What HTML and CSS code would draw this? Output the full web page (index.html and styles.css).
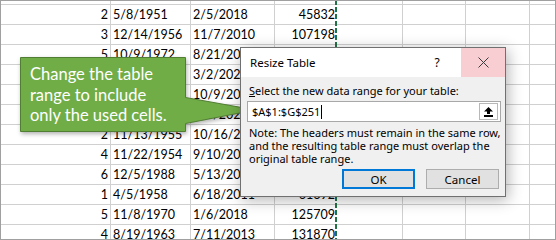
FILE: index.html
```html
<!DOCTYPE html>
<html lang="en">
<head>
  <title>Resize Table</title>
  <link rel="stylesheet" href="styles.css">
</head>
<body>
  <div class="sheet">
    <div class="row top"><div class="c n">4</div><div class="c">3/2/1961</div><div class="c">4/5/2015</div><div class="c n d">98213</div><div class="c"></div><div class="c"></div><div class="c"></div><div class="c"></div></div>
    <div class="row"><div class="c n">2</div><div class="c">5/8/1951</div><div class="c">2/5/2018</div><div class="c n d">45832</div><div class="c"></div><div class="c"></div><div class="c"></div><div class="c"></div></div>
    <div class="row"><div class="c n">3</div><div class="c">12/14/1956</div><div class="c">11/7/2010</div><div class="c n d">107198</div><div class="c"></div><div class="c"></div><div class="c"></div><div class="c"></div></div>
    <div class="row"><div class="c n">5</div><div class="c">10/9/1972</div><div class="c">8/21/2012</div><div class="c n d">71234</div><div class="c"></div><div class="c"></div><div class="c"></div><div class="c"></div></div>
    <div class="row"><div class="c n">1</div><div class="c">6/3/1949</div><div class="c">3/2/2020</div><div class="c n d">88123</div><div class="c"></div><div class="c"></div><div class="c"></div><div class="c"></div></div>
    <div class="row"><div class="c n">3</div><div class="c">7/21/1960</div><div class="c">10/9/2016</div><div class="c n d">55410</div><div class="c"></div><div class="c"></div><div class="c"></div><div class="c"></div></div>
    <div class="row"><div class="c n">6</div><div class="c">2/17/1983</div><div class="c">4/5/2021</div><div class="c n d">92001</div><div class="c"></div><div class="c"></div><div class="c"></div><div class="c"></div></div>
    <div class="row"><div class="c n">2</div><div class="c">11/13/1955</div><div class="c">10/16/2015</div><div class="c n d">84410</div><div class="c"></div><div class="c"></div><div class="c"></div><div class="c"></div></div>
    <div class="row"><div class="c n">4</div><div class="c">11/22/1954</div><div class="c">9/10/2014</div><div class="c n d">76025</div><div class="c"></div><div class="c"></div><div class="c"></div><div class="c"></div></div>
    <div class="row"><div class="c n">6</div><div class="c">12/5/1988</div><div class="c">5/13/2019</div><div class="c n d">39880</div><div class="c"></div><div class="c"></div><div class="c"></div><div class="c"></div></div>
    <div class="row"><div class="c n">1</div><div class="c">4/5/1958</div><div class="c">6/18/2011</div><div class="c n d">61692</div><div class="c"></div><div class="c"></div><div class="c"></div><div class="c"></div></div>
    <div class="row"><div class="c n">5</div><div class="c">11/8/1970</div><div class="c">1/6/2018</div><div class="c n d">125709</div><div class="c"></div><div class="c"></div><div class="c"></div><div class="c"></div></div>
    <div class="row last"><div class="c n">4</div><div class="c">8/19/1963</div><div class="c">7/11/2013</div><div class="c n d">131870</div><div class="c"></div><div class="c"></div><div class="c"></div><div class="c"></div></div>

    <!-- marching ants around the table range -->
    <div class="ants"></div>

    <div class="callout">
      <svg class="callout-shape" width="240" height="84" viewBox="0 0 240 84">
        <polygon points="0.5,0.5 165.5,0.5 165.5,40.5 230,52 230,54 165.5,66.5 165.5,74.5 0.5,74.5" fill="#70ad47" stroke="#507e32" stroke-width="1"/>
      </svg>
      <p class="callout-text">Change the table<br>range to include<br>only the used cells.</p>
    </div>

    <div class="dialog">
      <div class="dialog-title">
        <span class="title-text">Resize Table</span>
        <span class="help">?</span>
        <span class="close">
          <svg width="11" height="11" viewBox="0 0 11 11"><path d="M0.5 0.5 L10.5 10.5 M10.5 0.5 L0.5 10.5" stroke="#3c3c3c" stroke-width="1" fill="none"/></svg>
        </span>
      </div>
      <div class="dialog-body">
        <div class="label"><u>S</u>elect the new data range for your table:</div>
        <div class="range-box">
          <span class="range-text">$A$1:$G$251</span><span class="caret"></span>
          <span class="collapse-btn">
            <svg width="9" height="10" viewBox="0 0 9 10"><path d="M4.5 0 L9 4.5 L6 4.5 L6 7 L3 7 L3 4.5 L0 4.5 Z M0 8 H9 V10 H0 Z" fill="#000"/></svg>
          </span>
        </div>
        <div class="note">Note: The headers must remain in the same row,<br>and the resulting table range must overlap the<br>original table range.</div>
        <div class="buttons">
          <button class="btn btn-ok">OK</button>
          <button class="btn">Cancel</button>
        </div>
      </div>
    </div>
  </div>
</body>
</html>
```

FILE: styles.css
```css
body {
  margin: 0;
  background: #ffffff;
  overflow: hidden;
}

.sheet {
  position: relative;
  width: 556px;
  height: 240px;
  box-sizing: border-box;
  border: 1px solid #a0a0a0;
  overflow: hidden;
  font-family: Lato, 'Liberation Sans', sans-serif;
  font-size: 12.5px;
  color: #000;
}

.row {
  display: grid;
  grid-template-columns: 110px 80px 84px 62px 66px 63px 64px 1fr;
  height: 20px;
  box-sizing: border-box;
  border-bottom: 1px solid #d0d0d0;
}

.row.top {
  height: 4px;
}

.row.last {
  height: 14px;
  border-bottom: none;
}

.c {
  display: flex;
  align-items: flex-end;
  overflow: hidden;
  box-sizing: border-box;
  border-right: 1px solid #d0d0d0;
  padding: 0 2px 0 2px;
  line-height: 19px;
  white-space: nowrap;
}

.row.last .c {
  align-items: flex-start;
}

.c.n {
  justify-content: flex-end;
}

.c.d {
  border-right: none;
  padding-right: 2px;
}

.c:last-child {
  border-right: none;
}

.ants {
  position: absolute;
  left: 334px;
  top: -1px;
  bottom: 0;
  width: 2px;
  background: repeating-linear-gradient(to bottom, #217346 0 5px, transparent 5px 7px);
}

/* green callout */
.callout {
  position: absolute;
  left: 19px;
  top: 56px;
  width: 240px;
  height: 84px;
}

.callout-shape {
  position: absolute;
  left: 0;
  top: 0;
  filter: drop-shadow(1px 2px 2px rgba(0, 0, 0, 0.3));
}

.callout-text {
  position: relative;
  margin: 0;
  padding: 7px 0 0 10px;
  font-family: Lato, 'Liberation Sans', sans-serif;
  font-size: 16.5px;
  line-height: 20.5px;
  color: #ffffff;
  white-space: nowrap;
}

/* resize dialog */
.dialog {
  position: absolute;
  left: 239px;
  top: 46px;
  width: 266px;
  height: 150px;
  box-sizing: border-box;
  border: 1px solid #707070;
  background: #f0f0f0;
  box-shadow: 2px 3px 14px rgba(0, 0, 0, 0.3);
  font-family: 'Noto Sans', 'Open Sans', sans-serif;
  font-size: 11px;
  color: #000;
}

.dialog-title {
  display: flex;
  align-items: center;
  height: 29px;
  background: #ffffff;
}

.title-text {
  padding-left: 9px;
  font-size: 11.5px;
}

.help {
  margin-left: auto;
  width: 48px;
  text-align: center;
  font-size: 12px;
}

.close {
  display: flex;
  align-items: center;
  justify-content: center;
  width: 44px;
  height: 29px;
  background: #f8ced3;
}

.dialog-body {
  padding: 6px 0 0 6px;
}

.label {
  margin-left: 2px;
  line-height: 15px;
}

.range-box {
  display: flex;
  align-items: center;
  width: 254px;
  height: 21px;
  margin-top: 3px;
  box-sizing: border-box;
  border: 1px solid #a8a8a8;
  background: #ffffff;
}

.range-text {
  padding-left: 4px;
}

.caret {
  width: 1px;
  height: 14px;
  margin-left: 1px;
  background: #000;
}

.collapse-btn {
  display: flex;
  align-items: center;
  justify-content: center;
  margin-left: auto;
  margin-right: 2px;
  width: 19px;
  height: 17px;
  box-sizing: border-box;
  border: 1px solid #b8b8b8;
  background: #ffffff;
}

.note {
  margin: 4px 0 0 2px;
  line-height: 13px;
  white-space: nowrap;
}

.buttons {
  display: flex;
  justify-content: flex-end;
  gap: 11px;
  margin-top: 4px;
  padding-right: 6px;
}

.btn {
  width: 73px;
  height: 20px;
  box-sizing: border-box;
  padding: 0;
  border: 1px solid #adadad;
  background: #e1e1e1;
  font-family: 'Noto Sans', 'Open Sans', sans-serif;
  font-size: 11.5px;
  color: #000;
}

.btn-ok {
  border: 2px solid #0078d7;
}
```
